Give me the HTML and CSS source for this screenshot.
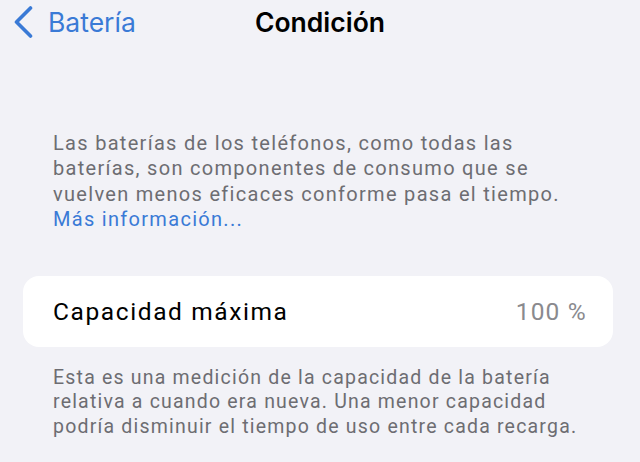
FILE: index.html
```html
<!DOCTYPE html>
<html lang="es">
<head>
    <meta charset="UTF-8">
    <meta name="viewport" content="width=device-width, initial-scale=1.0">
    <title>Condición</title>
    <link rel="stylesheet" href="styles.css">
</head>
<body>
    <div class="screen">
        <header class="nav">
            <a href="#" class="nav__back">
                <svg class="nav__chevron" width="21" height="32" viewBox="0 0 21 32">
                    <path d="M17.5 2 L3.5 16 L17.5 30" fill="none" stroke="currentColor" stroke-width="3.6" stroke-linecap="round" stroke-linejoin="round"/>
                </svg>
                <span>Batería</span>
            </a>
            <h1 class="nav__title">Condición</h1>
        </header>

        <!-- Intro text -->
        <p class="note note--intro">
            Las baterías de los teléfonos, como todas las baterías, son componentes de consumo que se vuelven menos eficaces conforme pasa el tiempo.
            <a href="#" class="note__link">Más información...</a>
        </p>

        <!-- Capacity row -->
        <div class="card">
            <span class="card__label">Capacidad máxima</span>
            <span class="card__value">100 %</span>
        </div>

        <p class="note note--footer">
            Esta es una medición de la capacidad de la batería relativa a cuando era nueva. Una menor capacidad podría disminuir el tiempo de uso entre cada recarga.
        </p>
    </div>
</body>
</html>
```

FILE: styles.css
```css
body {
    margin: 0;
    background-color: #f2f2f7;
    font-family: Inter, "Noto Sans", sans-serif;
    color: #000;
}

.screen {
    width: 640px;
    height: 462px;
    overflow: hidden;
}

.nav {
    position: relative;
    height: 44px;
    display: flex;
    align-items: center;
}

.nav__back {
    display: flex;
    align-items: center;
    gap: 14px;
    padding-left: 13px;
    color: #3a7ad6;
    text-decoration: none;
    font-size: 26.5px;
    z-index: 1;
}

.nav__chevron {
    display: block;
}

.nav__title {
    position: absolute;
    left: 0;
    right: 0;
    margin: 0;
    text-align: center;
    font-size: 26.5px;
    font-weight: 600;
}

.note {
    margin: 0;
    padding: 0 50px 0 53px;
    color: #6d6d72;
    font-family: Roboto, sans-serif;
    font-size: 20px;
    line-height: 25.4px;
    letter-spacing: 1.3px;
}

.note--intro {
    margin-top: 87px;
}

.note__link {
    display: block;
    color: #3a7ad6;
    text-decoration: none;
}

.card {
    margin: 43px 27px 0 23px;
    height: 71px;
    padding: 0 26px 0 30px;
    background-color: #fff;
    border-radius: 16px;
    display: flex;
    align-items: center;
    justify-content: space-between;
    font-family: Roboto, sans-serif;
    font-size: 24.5px;
    letter-spacing: 1.6px;
}

.card__value {
    color: #8a8a8e;
    letter-spacing: 1.2px;
}

.note--footer {
    margin-top: 19px;
    font-size: 19.5px;
    line-height: 24.5px;
    letter-spacing: 1.2px;
}
```
